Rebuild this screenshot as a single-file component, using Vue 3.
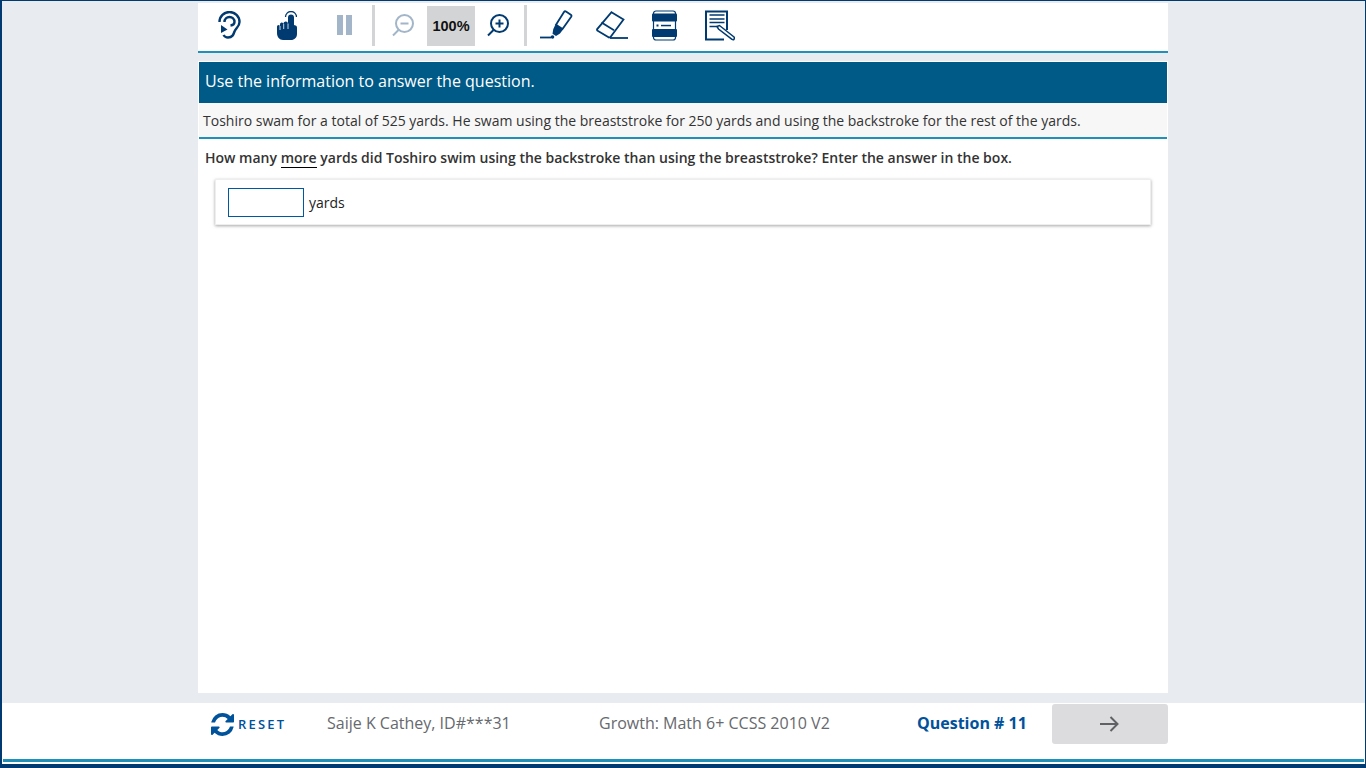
<template>
  <div class="page">
    <main class="sheet">
      <div class="toolbar">
        <button class="tool ear" aria-label="Listen">
          <svg width="23" height="28" viewBox="0 0 23 28" fill="none" stroke="#003a70" stroke-width="2.400">
            <path d="M1.500 11a10 10 0 0 1 20 0c0 4.500-3.500 6-5 9.500-1 3-2 6-6.500 6-2 0-3.500-.8-4.500-2.500" />
            <path d="M6.500 11a5 5 0 0 1 10 0c0 2.200-1.800 3.200-4 3.500" />
            <path d="M3 14l6.500 4.500L3 22z" fill="#003a70" stroke="none" />
          </svg>
        </button>
        <button class="tool hand" aria-label="Touch">
          <svg width="20" height="29" viewBox="0 0 20 29">
            <path d="M8.500 6a5.500 5.500 0 0 1 11 0" fill="none" stroke="#003a70" stroke-width="1.300" />
            <path d="M11 6.500a3 3 0 0 1 6 0V14l1.500.5c1 .4 1.500 1 1.500 2.500v6c0 3.500-2.500 6-6 6H6c-3.500 0-6-3-6-7v-6.500a1.500 1.500 0 0 1 3 0v-2a1.700 1.700 0 0 1 3.500-.5 1.700 1.700 0 0 1 4.500-.5z" fill="#003a70" />
            <path d="M3 15v4M6.700 13v5M11 12.500v5.500" stroke="#fff" stroke-width=".8" fill="none" />
          </svg>
        </button>
        <button class="tool pause" aria-label="Pause">
          <span class="pause-bar"></span>
          <span class="pause-bar"></span>
        </button>
        <span class="divider"></span>
        <button class="tool zoom-out" aria-label="Zoom out">
          <svg width="22" height="23" viewBox="0 0 22 23" fill="none" stroke="#a3b6c9" stroke-width="2">
            <circle cx="12.500" cy="9.500" r="8.500" />
            <path d="M8.500 9.500h8M6.500 16l-5.500 5.500" />
          </svg>
        </button>
        <span class="zoom-level">100%</span>
        <button class="tool zoom-in" aria-label="Zoom in">
          <svg width="22" height="23" viewBox="0 0 22 23" fill="none" stroke="#003a70" stroke-width="2">
            <circle cx="12.500" cy="9.500" r="8.500" />
            <path d="M8.500 9.500h8M12.500 5.500v8M6.500 16l-5.500 5.500" />
          </svg>
        </button>
        <span class="divider second"></span>
        <button class="tool pen" aria-label="Highlighter">
          <svg width="33" height="30" viewBox="0 0 33 30" fill="none" stroke="#003a70" stroke-width="1.800">
            <path d="M0 27.500h11" />
            <circle cx="12.500" cy="27" r="1.800" fill="#003a70" stroke="none" />
            <path d="M26 1.500l4.800 3.200a1.500 1.500 0 0 1 .4 2L22.500 19l-6.500-4.200L24 2a1.500 1.500 0 0 1 2-.5z" />
            <path d="M15.500 14.500l7.500 5-3 4-4 2.500-3.500-2.200.8-4.800z" fill="#003a70" stroke="none" />
          </svg>
        </button>
        <button class="tool eraser" aria-label="Eraser">
          <svg width="32" height="28" viewBox="0 0 32 28" fill="none" stroke="#003a70" stroke-width="1.800">
            <path d="M15.500 1.200l12 7.300L14.500 26l-1.500.5L1.200 19.500l-.2-1.200z" />
            <path d="M5.500 11.500l12.500 7.800" />
            <path d="M14 27h18" />
          </svg>
        </button>
        <button class="tool notes" aria-label="Line reader">
          <svg width="25" height="31" viewBox="0 0 25 31">
            <rect x="1.500" y="1" width="22" height="29" rx="2.500" fill="none" stroke="#003a70" stroke-width="1.200" />
            <rect x="0" y="3.500" width="25" height="8" rx="1" fill="#003a70" />
            <rect x="0" y="19" width="25" height="8" rx="1" fill="#003a70" />
            <rect x="4.500" y="14.500" width="2" height="2" fill="#003a70" />
            <rect x="9" y="14.800" width="10" height="1.500" fill="#003a70" />
          </svg>
        </button>
        <button class="tool notepad" aria-label="Notepad">
          <svg width="30" height="31" viewBox="0 0 30 31" fill="none" stroke="#003a70">
            <path d="M22 20V1.500H1v28h18" stroke-width="2" />
            <path d="M4.500 5h15M4.500 9h15M4.500 12.500h15M4.500 16.500h8" stroke-width="1.400" />
            <path d="M12 16.500l2.500-1 14.500 11.500c.8 1 .5 1.500 0 2.200s-1.200.8-2 .1L13.500 19z" fill="#fff" stroke-width="1.500" />
          </svg>
        </button>
      </div>
      <div class="spacer"></div>
      <h1 class="banner">Use the information to answer the question.</h1>
      <p class="passage">Toshiro swam for a total of 525 yards. He swam using the breaststroke for 250 yards and using the backstroke for the rest of the yards.</p>
      <p class="question">How many <span class="more">more</span> yards did Toshiro swim using the backstroke than using the breaststroke? Enter the answer in the box.</p>
      <div class="answer-card">
        <input v-model="answer" class="answer" type="text" aria-label="Answer" />
        <span>yards</span>
      </div>
    </main>
    <footer class="footer">
      <div class="footer-inner">
        <div class="reset-cell">
          <button class="reset">
            <svg width="23" height="23" viewBox="128 128 1536 1536" fill="#00529b">
              <path d="M1639 1056q0 5-1 7-64 268-268 434.500t-478 166.500q-146 0-282.500-55t-243.500-157l-129 129q-19 19-45 19t-45-19-19-45v-448q0-26 19-45t45-19h448q26 0 45 19t19 45-19 45l-137 137q71 66 161 102t187 36q134 0 250-65t186-179q11-17 53-117 8-23 30-23h192q13 0 22.500 9.500t9.500 22.500zm25-800v448q0 26-19 45t-45 19h-448q-26 0-45-19t-19-45 19-45l138-138q-148-137-349-137-134 0-250 65t-186 179q-11 17-53 117-8 23-30 23h-199q-13 0-22.500-9.500t-9.500-22.500v-7q65-268 270-434.500t480-166.500q146 0 284 55.500t245 156.500l130-129q19-19 45-19t45 19 19 45z" />
            </svg>
            <span>RESET</span>
          </button>
        </div>
        <span class="student">Saije K Cathey, ID#***31</span>
        <span class="test-name">Growth: Math 6+ CCSS 2010 V2</span>
        <span class="question-no">Question # 11</span>
        <button class="next" aria-label="Next">
          <svg width="20" height="18" viewBox="0 0 20 18" fill="none" stroke="#5f6164" stroke-width="2">
            <path d="M0 9h17.500M10.500 2l7 7-7 7" />
          </svg>
        </button>
      </div>
      <div class="footer-line"></div>
    </footer>
  </div>
</template>

<script setup>
import { ref } from 'vue'

const answer = ref('')
</script>

<style>
html,
body {
  margin: 0;
  height: 100%;
  overflow: hidden;
}
</style>

<style scoped>
.page {
  box-sizing: border-box;
  height: 768px;
  display: flex;
  flex-direction: column;
  background: #e8ebef;
  border: solid #003a70;
  border-width: 1px 1px 4px 2px;
  font-family: "Open Sans", "Noto Sans", sans-serif;
  color: #333;
}

.sheet {
  box-sizing: border-box;
  width: 970px;
  height: 690px;
  flex: none;
  margin: 2px 0 0 196px;
  background: #fff;
  display: flex;
  flex-direction: column;
}

.toolbar {
  box-sizing: border-box;
  height: 50px;
  flex: none;
  padding-bottom: 4px;
  display: flex;
  align-items: center;
  border-bottom: 2px solid #2090b8;
}

.tool {
  border: 0;
  padding: 0;
  background: none;
  display: flex;
  align-items: center;
  justify-content: center;
  flex: none;
}

.ear { margin-left: 20px; width: 23px; }
.hand { margin-left: 36px; width: 20px; }
.pause { margin-left: 40px; width: 15px; gap: 3px; }
.zoom-out { margin-left: 17px; width: 22px; }
.zoom-in { margin-left: 12px; width: 22px; }
.pen { margin-left: 13px; width: 33px; }
.eraser { margin-left: 23px; width: 32px; }
.notes { margin-left: 24px; width: 25px; }
.notepad { margin-left: 28px; width: 30px; }

.tool svg {
  display: block;
}

.pause-bar {
  width: 6px;
  height: 20px;
  background: #a3b6c9;
}

.divider {
  flex: none;
  margin-left: 20px;
  width: 3px;
  height: 41px;
  background: #d3d4d6;
}

.divider.second {
  margin-left: 15px;
}

.zoom-level {
  flex: none;
  margin: 2px 0 0 13px;
  width: 48px;
  height: 40px;
  display: flex;
  align-items: center;
  justify-content: center;
  background: #d3d4d6;
  color: #111;
  font: bold 14.5px "Liberation Sans", Arial, sans-serif;
}

.spacer {
  height: 8px;
  flex: none;
  background: #e8ebef;
}

.banner {
  margin: 1px 1px 0;
  height: 41px;
  padding: 0 6px;
  background: #005a87;
  color: #fff;
  font-size: 16px;
  font-weight: 400;
  line-height: 39px;
  box-sizing: border-box;
  flex: none;
}

.passage {
  margin: 0 1px;
  height: 36px;
  flex: none;
  padding: 0 4px;
  box-sizing: border-box;
  background: #f7f7f7;
  border-bottom: 2px solid #2090b8;
  font-size: 14px;
  line-height: 35px;
}

.question {
  margin: 0;
  padding: 9px 7px 0;
  font-size: 14px;
  font-weight: 600;
  line-height: 20px;
}

.more {
  border-bottom: 1px solid #000;
}

.answer-card {
  margin: 11px 17px 0;
  height: 46px;
  padding: 0 12px;
  box-sizing: border-box;
  display: flex;
  align-items: center;
  gap: 5px;
  background: #fff;
  border: 1px solid #eee;
  box-shadow: 0 1px 3px rgba(0, 0, 0, 0.35);
  font-size: 14px;
  color: #222;
}

.answer {
  box-sizing: border-box;
  width: 76px;
  height: 29px;
  border: 1px solid #00589f;
  padding: 0 4px;
  outline: none;
}

.footer {
  margin-top: 10px;
  flex: 1;
  background: #fff;
  display: flex;
  flex-direction: column;
}

.footer-inner {
  width: 970px;
  height: 41px;
  padding-top: 1px;
  box-sizing: border-box;
  margin: 0 0 15px 196px;
  display: flex;
  align-items: center;
  font-size: 16px;
  color: #66696d;
}

.reset-cell {
  flex: none;
  width: 129px;
  padding-left: 13px;
  box-sizing: border-box;
}

.reset {
  display: flex;
  align-items: center;
  gap: 4px;
  border: 0;
  padding: 0;
  background: none;
  color: #00529b;
  font-family: inherit;
  font-size: 13px;
  font-weight: 600;
  letter-spacing: 2.2px;
}

.student {
  flex: none;
  width: 272px;
  padding-bottom: 2px;
}

.test-name {
  flex: none;
  width: 318px;
  padding-bottom: 2px;
}

.question-no {
  flex: none;
  width: 135px;
  padding-bottom: 2px;
  color: #00529b;
  font-weight: 700;
}

.next {
  flex: none;
  width: 116px;
  height: 40px;
  border: 0;
  padding: 0;
  border-radius: 3px;
  background: #dcdcde;
  display: flex;
  align-items: center;
  justify-content: center;
}

.footer-line {
  height: 3px;
  margin: 0 1px;
  background: #2090b8;
}
</style>
